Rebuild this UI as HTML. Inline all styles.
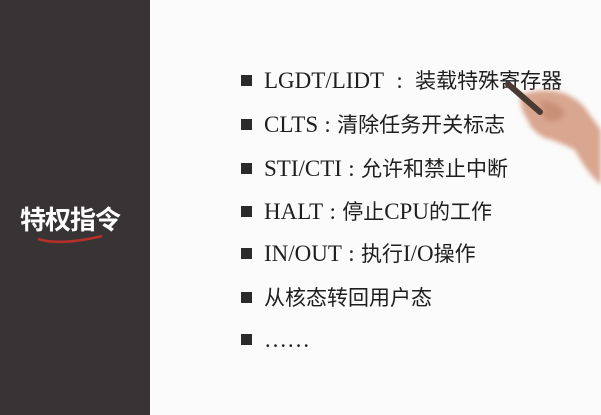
<!DOCTYPE html>
<html><head><meta charset="utf-8"><style>
html,body{margin:0;padding:0;width:601px;height:415px;overflow:hidden;background:#fbfbfb;}
#left{position:absolute;left:0;top:0;width:150px;height:415px;background:#383436;}
#title{position:absolute;left:20px;top:204px;font:bold 26px "Noto Sans CJK SC",sans-serif;color:#fff;letter-spacing:-1px;line-height:30px;}
.li{position:absolute;left:241px;font-size:23px;color:#1e1e1e;font-family:"Liberation Serif","Noto Sans CJK SC",serif;line-height:26px;white-space:nowrap;}
.li b{display:inline-block;width:11px;height:11px;background:#2a2a2a;margin-right:12px;vertical-align:2px;}
.c{font-family:"Noto Sans CJK SC",sans-serif;font-size:21px;}
.k{display:inline-block;width:19px;text-align:center;}
</style></head><body>
<div id="left"></div>
<div id="title">特权指令</div>
<div class="li" style="top:67px"><b></b>LGDT/LIDT<span class="k" style="width:31px">:</span><span class="c">装载特殊寄存器</span></div>
<div class="li" style="top:111px"><b></b>CLTS<span class="k">:</span><span class="c">清除任务开关标志</span></div>
<div class="li" style="top:155px"><b></b>STI/CTI<span class="k">:</span><span class="c">允许和禁止中断</span></div>
<div class="li" style="top:198px"><b></b>HALT<span class="k">:</span><span class="c">停止</span>CPU<span class="c">的工作</span></div>
<div class="li" style="top:240px"><b></b>IN/OUT<span class="k">:</span><span class="c">执行</span>I/O<span class="c">操作</span></div>
<div class="li" style="top:284px"><b></b><span class="c">从核态转回用户态</span></div>
<div class="li" style="top:327px"><b></b>……</div>
<svg style="position:absolute;left:0;top:0" width="601" height="415">
<path d="M38 239 Q60 246 102 236" stroke="#b8302a" stroke-width="2.5" fill="none"/>
<defs><filter id="bl"><feGaussianBlur stdDeviation="2.5"/></filter></defs>
<g filter="url(#bl)">
<path d="M520 95 Q540 88 560 92 Q580 98 590 115 L601 130 L601 185 Q585 170 575 150 Q555 140 545 138 Q530 130 528 120 Q520 110 520 95 Z" fill="#d9a68f"/>
<path d="M540 100 Q555 100 565 112 Q560 125 545 120 Z" fill="#c99078"/>
</g>
<line x1="508" y1="84" x2="540" y2="112" stroke="#4a3a34" stroke-width="6" stroke-linecap="round"/>
</svg>
</body></html>
